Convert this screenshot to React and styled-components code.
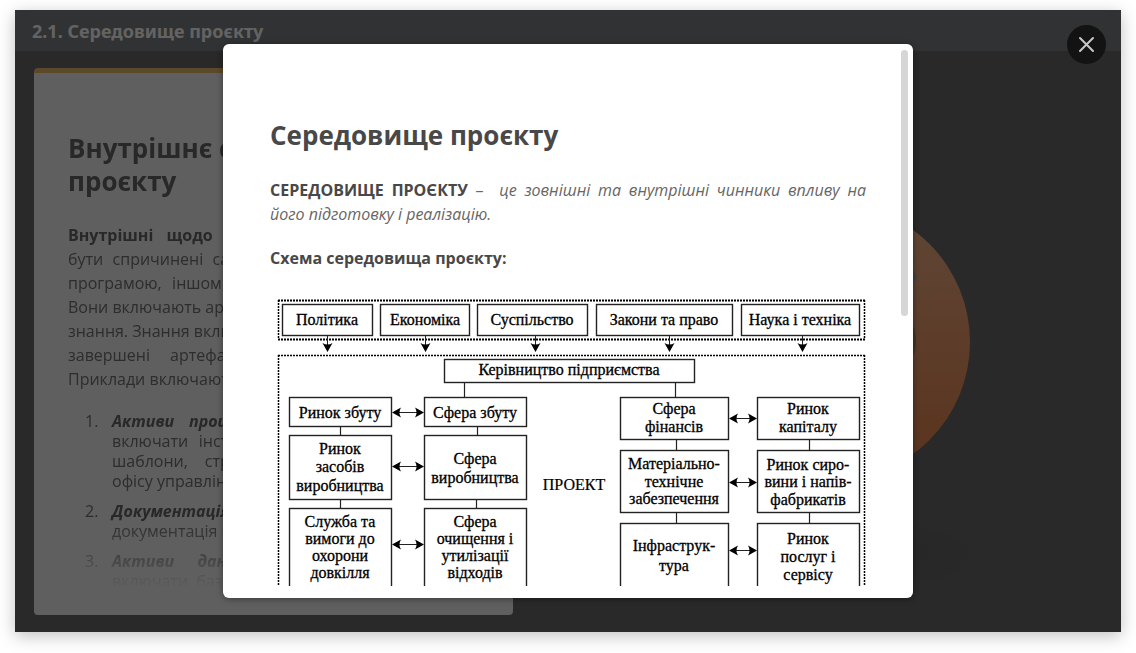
import React from "react";
import styled, { createGlobalStyle } from "styled-components";

const GlobalStyle = createGlobalStyle`
  * { box-sizing: border-box; }
  body {
    margin: 0;
    background: #fff;
    font-family: "Open Sans", "Noto Sans", sans-serif;
  }
`;

const Page = styled.div`
  min-height: 100vh;
  padding: 10px 15px 21px;
  display: flex;
`;

const Player = styled.div`
  position: relative;
  flex: 1;
  min-width: 0;
  display: flex;
  flex-direction: column;
  background: #666;
  box-shadow: 0 4px 16px rgba(0, 0, 0, 0.25);
`;

const TopBar = styled.header`
  height: 41px;
  padding: 0 17px;
  display: flex;
  align-items: center;
  background: #7c7e80;
`;

const SlideTitle = styled.h1`
  margin: 0;
  font-family: "Noto Sans", "Open Sans", sans-serif;
  font-size: 18px;
  line-height: 24px;
  font-weight: 700;
  color: #f8f8f8;
`;

const Slide = styled.main`
  flex: 1;
  display: flex;
  gap: 30px;
  padding: 17px 0 17px 19px;
`;

const Card = styled.article`
  flex: 0 0 44%;
  max-width: 479px;
  height: 547px;
  padding: 59px 34px 29px;
  border-top: 5px solid #e3b766;
  border-radius: 4px;
  background: #ededed;
`;

const Fade = styled.div`
  height: 454px;
  overflow: hidden;
  mask-image: linear-gradient(#000 390px, transparent 458px);
`;

const Heading = styled.h2`
  margin: 0 0 ${(p) => p.$gap}px;
  font-size: 26px;
  line-height: 33px;
  font-weight: 700;
  color: ${(p) => p.$color};
`;

const CardText = styled.p`
  margin: 0 0 20px;
  font-size: 16px;
  line-height: 24px;
  color: #707070;
  b { color: #646464; }
`;

const Line = styled.span`
  display: block;
  white-space: nowrap;
  text-align: justify;
  text-align-last: ${(p) => (p.$last ? "left" : "justify")};
`;

const List = styled.ol`
  margin: 0;
  padding: 0 0 0 17px;
  list-style: none;
  counter-reset: asset;
  font-size: 16px;
  line-height: 20px;
  color: #707070;
  b { color: #646464; font-style: italic; }
`;

const ListItem = styled.li`
  display: grid;
  grid-template-columns: 27px minmax(0, 1fr);
  margin-bottom: 10px;
  counter-increment: asset;
  &::before { content: counter(asset) "."; }
`;

const Art = styled.div`
  flex: 1;
  display: flex;
  justify-content: center;
  svg { width: 278px; height: 547px; overflow: visible; }
`;

const Overlay = styled.div`
  position: absolute;
  inset: 0;
  padding: 34px 208px;
  background: rgba(0, 0, 0, 0.6);
`;

const Modal = styled.section`
  position: relative;
  height: 554px;
  padding-bottom: 12px;
  border-radius: 6px;
  background: #fff;
  box-shadow: 0 1px 6px rgba(0, 0, 0, 0.4);
`;

const ModalScroll = styled.div`
  height: 542px;
  padding: 75px 47px 0;
  overflow-y: auto;
  scrollbar-width: none;
`;

const ModalText = styled.p`
  margin: 0 0 20px;
  font-size: 16px;
  line-height: 24px;
  text-align: justify;
  white-space: pre-wrap;
  color: #666;
  b { color: #484848; }
`;

const Thumb = styled.div`
  position: absolute;
  top: 6px;
  right: 5px;
  width: 7px;
  height: 266px;
  border-radius: 4px;
  background: #d6d6d6;
`;

const CloseButton = styled.button`
  position: absolute;
  top: 15px;
  right: 15px;
  width: 39px;
  height: 39px;
  padding: 0;
  display: grid;
  place-items: center;
  border: 0;
  border-radius: 50%;
  background: #131313;
`;

const Diagram = styled.svg`
  display: block;
  width: 100%;
  font-family: "Liberation Serif", "Times New Roman", serif;
  font-size: 16px;
  text-anchor: middle;
  fill: #000;
`;

/* x, y, width, height, then [text, baseline] pairs */
const nodes = [
  [12, 14, 91, 32, ["Політика", 35]],
  [110, 14, 90, 32, ["Економіка", 35]],
  [207, 14, 111, 32, ["Суспільство", 35]],
  [326, 14, 137, 32, ["Закони та право", 35]],
  [471, 14, 119, 32, ["Наука і техніка", 35]],
  [174, 69, 251, 24, ["Керівництво підприємства", 85]],
  [19, 107, 103, 30, ["Ринок збуту", 128]],
  [154, 107, 103, 30, ["Сфера збуту", 128]],
  [350, 107, 109, 43, ["Сфера", 124], ["фінансів", 142]],
  [487, 107, 103, 43, ["Ринок", 124], ["капіталу", 142]],
  [19, 145, 103, 65, ["Ринок", 164], ["засобів", 182], ["виробництва", 201]],
  [154, 145, 103, 65, ["Сфера", 174], ["виробництва", 193]],
  [350, 160, 109, 63, ["Матеріально-", 179], ["технічне", 197], ["забезпечення", 214]],
  [487, 160, 103, 63, ["Ринок сиро-", 180], ["вини і напів-", 197], ["фабрикатів", 215]],
  [19, 218, 103, 86, ["Служба та", 237], ["вимоги до", 254], ["охорони", 271], ["довкілля", 288]],
  [154, 218, 103, 86, ["Сфера", 237], ["очищення і", 254], ["утилізації", 271], ["відходів", 288]],
  [350, 233, 109, 71, ["Інфраструк-", 261], ["тура", 281]],
  [487, 233, 103, 71, ["Ринок", 254], ["послуг і", 272], ["сервісу", 290]],
];
const downArrows = [57, 155, 265, 399, 532];
const sideArrows = [
  [122, 154, 122], [122, 154, 176], [122, 154, 254],
  [459, 487, 128], [459, 487, 192], [459, 487, 260],
];
const links = [
  [194, 93, 107], [405, 93, 107], [70, 137, 145], [207, 137, 145],
  [70, 210, 218], [206, 210, 218], [406, 150, 160], [539, 150, 160],
  [406, 223, 233], [539, 223, 233],
];

function Scheme() {
  return (
    <Diagram viewBox="0 0 596 320" role="img" aria-label="Схема середовища проєкту">
      <g fill="none" stroke="#000" strokeWidth="2" strokeDasharray="2 1">
        <path d="M8 10.500H595" />
        <path d="M8 49.500H595" />
        <path d="M8.500 10V49M594.500 10V49" strokeWidth="1.500" />
        <path d="M8 65.500H595M8.500 65V312M594.500 65V312" strokeWidth="1.500" />
      </g>
      <g stroke="#222" strokeWidth="1.200">
        {links.map(([x, a, b]) => <path key={`${x}-${a}`} d={`M${x + 0.5} ${a}V${b}`} />)}
      </g>
      {nodes.map(([x, y, w, h, ...lines]) => (
        <g key={`${x}-${y}`}>
          <rect x={x + 0.5} y={y + 0.5} width={w - 1} height={h - 1} fill="#fff" stroke="#222" strokeWidth="1.4" />
          {lines.map(([t, base]) => (
            <text key={t} x={Math.floor(x + w / 2)} y={base} stroke="#000" strokeWidth="0.3">{t}</text>
          ))}
        </g>
      ))}
      {downArrows.map((x) => (
        <g key={x}>
          <path d={`M${x + 0.5} 46V56`} stroke="#222" />
          <path d={`M${x + 0.5} 62l-5 -9q5 3 10 0z`} />
        </g>
      ))}
      {sideArrows.map(([a, b, y]) => (
        <g key={`${a}-${y}`}>
          <path d={`M${a + 5} ${y + 0.5}H${b - 5}`} stroke="#222" />
          <path d={`M${a} ${y + 0.5}l9 -5q-3 5 0 10z`} />
          <path d={`M${b} ${y + 0.5}l-9 -5q3 5 0 10z`} />
        </g>
      ))}
      <text x="304" y="200" stroke="#000" strokeWidth="0.2">ПРОЕКТ</text>
    </Diagram>
  );
}

const intro = [
  <><b>Внутрішні щодо організації чинники</b> можуть</>,
  "бути спричинені самою організацією, портфелем,",
  "програмою, іншом проєктом або їх поєднанням.",
  "Вони включають артефакти, практики або внутрішні",
  "знання. Знання включають отриманий досвід, також",
  "завершені артефакти з попередніх проєктів.",
  "Приклади включають, зокрема, таке:",
];
const assets = [
  [
    <><b>Активи процесу.</b> Активи процесу можуть</>,
    "включати інструменти, методології, підходи,",
    "шаблони, структури, зразки або ресурси",
    "офісу управління проєктами.",
  ],
  [<><b>Документація з управління.</b> Ця</>, "документація включає політики та процеси."],
  [<><b>Активи даних.</b> Активи даних можуть</>, "включати бази даних, бібліотеки документів,"],
];

const Lines = ({ lines, ragged }) =>
  lines.map((line, i) => (
    <Line key={i} $last={ragged && i === lines.length - 1}>{line}</Line>
  ));

export default function App() {
  return (
    <>
      <GlobalStyle />
      <Page>
        <Player>
          <TopBar>
            <SlideTitle>2.1. Середовище проєкту</SlideTitle>
          </TopBar>
          <Slide>
            <Card>
              <Fade>
                <Heading $color="#646464" $gap={25}>Внутрішнє середовище проєкту</Heading>
                <CardText><Lines lines={intro} ragged /></CardText>
                <List>
                  {assets.map((lines, i) => (
                    <ListItem key={i}>
                      <div><Lines lines={lines} ragged={i < 2} /></div>
                    </ListItem>
                  ))}
                </List>
              </Fade>
            </Card>
            <Art>
              <svg viewBox="0 0 278 547" aria-hidden="true">
                <defs>
                  <linearGradient id="ball" x1="0" y1="0" x2="0" y2="1">
                    <stop offset="0" stopColor="#f0b088" />
                    <stop offset="1" stopColor="#e08048" />
                  </linearGradient>
                  <radialGradient id="shade">
                    <stop offset="0" stopColor="#5e5e5e" />
                    <stop offset="1" stopColor="#5e5e5e" stopOpacity="0" />
                  </radialGradient>
                </defs>
                <ellipse cx="139" cy="487" rx="150" ry="38" fill="url(#shade)" />
                <circle cx="138" cy="274" r="139" fill="url(#ball)" />
                <circle cx="220" cy="209" r="4" fill="#a6a6a6" />
                <ellipse cx="218" cy="273" rx="5" ry="16" fill="#a58a48" />
              </svg>
            </Art>
          </Slide>
          <Overlay>
            <Modal role="dialog" aria-label="Середовище проєкту">
              <ModalScroll>
                <Heading $color="#484848" $gap={26}>Середовище проєкту</Heading>
                <ModalText>
                  <b>СЕРЕДОВИЩЕ ПРОЄКТУ</b> –  <i>це зовнішні та внутрішні чинники впливу на його підготовку і реалізацію.</i>
                </ModalText>
                <ModalText><b>Схема середовища проєкту:</b></ModalText>
                <Scheme />
              </ModalScroll>
              <Thumb />
            </Modal>
            <CloseButton type="button" aria-label="Закрити">
              <svg width="17" height="17" viewBox="0 0 17 17" fill="none" stroke="#c8c8c8" strokeWidth="2" strokeLinecap="round" aria-hidden="true">
                <path d="M2 2l13 13M15 2L2 15" />
              </svg>
            </CloseButton>
          </Overlay>
        </Player>
      </Page>
    </>
  );
}
